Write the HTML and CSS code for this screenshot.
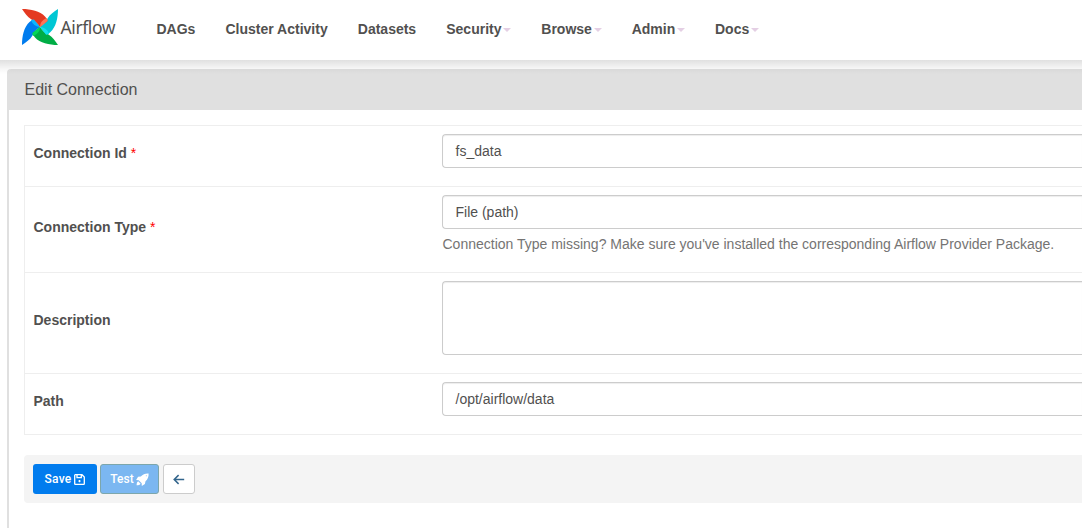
FILE: index.html
```html
<!DOCTYPE html>
<html lang="en">
<head>
<meta charset="utf-8">
<title>Edit Connection - Airflow</title>
<link rel="stylesheet" href="styles.css">
</head>
<body>
<header class="navbar">
  <a class="brand">
    <svg class="pinwheel" width="36" height="36" viewBox="-18 -18 36 36">
      <defs>
        <path id="blade" d="M-18-18C-9-18 0-16 5-10.500Q7.500-8 7.500-6L0 0C-3-4-5-6-8.500-7.500C-13-10-15-14-18-18Z"/>
        <path id="fold" d="M6.500-9Q8-7.500 7.500-6L0 0Q0-6 6.500-9Z"/>
      </defs>
      <use href="#blade" fill="#017cee" transform="rotate(270)"/>
      <use href="#blade" fill="#00ad46" transform="rotate(180)"/>
      <use href="#blade" fill="#00c7d4" transform="rotate(90)"/>
      <use href="#blade" fill="#e43921"/>
      <use href="#fold" fill="#0cb6ff" transform="rotate(270)"/>
      <use href="#fold" fill="#04d659" transform="rotate(180)"/>
      <use href="#fold" fill="#11e1ee" transform="rotate(90)"/>
      <use href="#fold" fill="#ff7557"/>
    </svg>
    <span class="brand-name">Airflow</span>
  </a>
  <nav class="menu">
    <a>DAGs</a>
    <a>Cluster Activity</a>
    <a>Datasets</a>
    <a>Security<b class="caret"></b></a>
    <a>Browse<b class="caret"></b></a>
    <a>Admin<b class="caret"></b></a>
    <a>Docs<b class="caret"></b></a>
  </nav>
</header>
<main class="panel">
  <h4 class="panel-heading">Edit Connection</h4>
  <form class="panel-body">
    <div class="fields">
      <div class="row row-id">
        <label>Connection Id <span class="required">*</span></label>
        <div class="cell"><div class="control">fs_data</div></div>
      </div>
      <div class="row row-type">
        <label>Connection Type <span class="required">*</span></label>
        <div class="cell">
          <div class="control">File (path)</div>
          <div class="help">Connection Type missing? Make sure you've installed the corresponding Airflow Provider Package.</div>
        </div>
      </div>
      <div class="row row-description">
        <label>Description</label>
        <div class="cell"><div class="control area"></div></div>
      </div>
      <div class="row row-path">
        <label>Path</label>
        <div class="cell"><div class="control">/opt/airflow/data</div></div>
      </div>
    </div>
    <div class="actions">
      <a class="btn save">Save
        <svg width="11" height="11" viewBox="0 0 11 11" fill="none" stroke="#fff" stroke-width="1.300"><path d="M1.300.7H8L10.300 3V9.700a.6.6 0 0 1-.6.6H1.300a.6.6 0 0 1-.6-.6V1.300a.6.6 0 0 1 .6-.6ZM3 1V3.600H7.300V1"/><path d="M4.500 7.200H6.500M5.500 6V8.300"/></svg>
      </a>
      <a class="btn test">Test
        <svg width="13" height="13" viewBox="0 0 13 13" fill="#fff"><path fill-rule="evenodd" d="M12.600.4C9.200.2 7 1.200 4.800 3.400L2.100 3.800.1 7.100 2.700 7.200 5.700 10.200 5.800 12.900 8.900 10.900 9.500 8.200C11.800 6 12.800 3.800 12.600.4ZM10.300 2.200a.5.5 0 1 1 0 1 .5.5 0 0 1 0-1ZM2.200 8.300C.9 9 .7 10.500.6 12.300 2.400 12.200 3.900 12 4.600 10.700Z"/></svg>
      </a>
      <a class="btn back">
        <svg width="12" height="11" viewBox="0 0 12 11" fill="none" stroke="#33658c" stroke-width="1.500"><path d="M11.200 5.500H1.500M5.600 1.100 1.200 5.500 5.600 9.900"/></svg>
      </a>
    </div>
  </form>
</main>
</body>
</html>
```
FILE: styles.css
```css
* { box-sizing: border-box; }

body {
  margin: 0;
  background: #fff;
  color: #51504f;
  font: 14px/20px "Liberation Sans", Arial, sans-serif;
}

.navbar {
  position: relative;
  display: flex;
  align-items: flex-start;
  height: 60px;
  padding-left: 22px;
  background: #fff;
}

/* soft shadow cast over the page below the bar */
.navbar::after {
  content: "";
  position: absolute;
  top: 60px;
  left: 0;
  right: 0;
  height: 14px;
  background: linear-gradient(rgba(0, 0, 0, .12), rgba(0, 0, 0, .03) 9px, transparent);
}

.brand {
  display: flex;
  width: 134.5px;
  padding-top: 9px;
}

.brand-name {
  margin-left: 2.5px;
  padding-top: 8px;
  font: 17.5px/20px "Noto Sans", sans-serif;
  letter-spacing: -.4px;
}

.menu {
  display: flex;
  gap: 30.1px;
  padding-top: 19px;
  font-weight: bold;
  white-space: nowrap;
}

.menu a {
  display: flex;
  align-items: center;
}

.caret {
  margin-left: 1.7px;
  margin-top: 1px;
  border: 4px solid transparent;
  border-top-color: #e4cfe4;
  border-bottom: 0;
}

.panel {
  height: 459px;
  margin: 9px 0 0 7px;
  border-left: 2px solid #e0e0e0;
  border-radius: 4px 0 0;
}

.panel-heading {
  height: 41px;
  margin: 0;
  padding: 11px 15.5px 9px;
  border-radius: 2px 0 0;
  background: #e0e0e0;
  font-size: 16px;
  font-weight: normal;
}

.panel-body { padding: 15px 0 0 15px; }

.fields {
  border: 1px solid #eee;
  border-right: 0;
}

.row {
  display: flex;
  align-items: center;
  padding-left: 8.5px;
}

.row + .row { border-top: 1px solid #eee; }

.row label {
  width: 408.5px;
  font-weight: bold;
}

.cell {
  flex: 1;
  align-self: flex-start;
  padding-top: 8px;
}

.row-id { height: 60px; }
.row-type { height: 86px; }
.row-description { height: 101px; }
.row-path { height: 61px; }
.row label { padding-bottom: 6px; }

.required {
  color: #f00;
  font-weight: normal;
}

.control {
  height: 34px;
  padding: 6px 12.5px;
  border: 1px solid #ccc;
  border-right: 0;
  border-radius: 4px 0 0 4px;
  box-shadow: inset 0 1px 1px rgba(0, 0, 0, .075);
}

.area { height: 74px; }

.help {
  margin-top: 5px;
  padding-left: .5px;
  color: #757473;
}

.actions {
  display: flex;
  height: 48px;
  margin-top: 20px;
  padding: 9px;
  border-radius: 4px 0 0 4px;
  background: #f4f4f4;
}

.btn {
  display: flex;
  align-items: center;
  justify-content: center;
  gap: 3px;
  height: 30px;
  border: 1px solid transparent;
  border-radius: 3px;
  color: #fff;
  font: 500 12px/18px Roboto, sans-serif;
}

.save {
  width: 64px;
  background: #017cee;
  letter-spacing: .2px;
}

.test {
  width: 59px;
  margin-left: 3px;
  border-color: #7ca6ab;
  background: #7bb7f1;
  gap: 2px;
}

.back {
  width: 32px;
  margin-left: 4px;
  border-color: #ccc;
  background: #fff;
}
```
